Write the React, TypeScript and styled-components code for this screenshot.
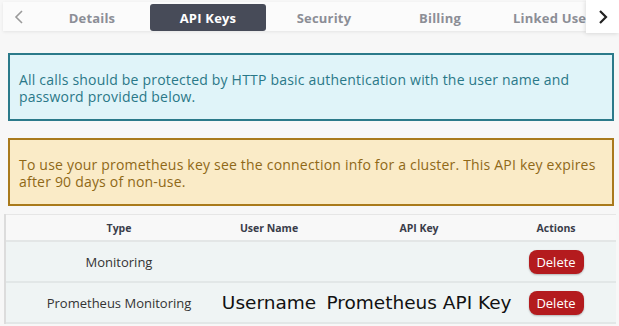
import React from "react";
import styled, { createGlobalStyle } from "styled-components";

const GlobalStyle = createGlobalStyle`
  body {
    margin: 0;
    background: #f7f7f7;
    font-family: "Open Sans", "Liberation Sans", sans-serif;
  }
`;

const Page = styled.div`
  width: 619px;
  height: 326px;
  overflow: hidden;
`;

const TabBar = styled.div`
  display: flex;
  align-items: flex-start;
  height: 34px;
`;

const TabPanel = styled.div`
  flex: 1;
  display: flex;
  align-items: center;
  height: 29px;
  margin: 2px 0 0 3px;
  background: #fbfbfb;
  box-shadow: 0 1px 3px rgba(0, 0, 0, 0.08);
  overflow: hidden;
`;

const Arrow = styled.button<{ $side: "left" | "right" }>`
  flex: none;
  display: flex;
  align-items: center;
  justify-content: center;
  border: none;
  padding: 0;
  cursor: pointer;
  width: ${(p) => (p.$side === "left" ? "31px" : "33px")};
  height: ${(p) => (p.$side === "left" ? "29px" : "33px")};
  background: ${(p) => (p.$side === "left" ? "transparent" : "#ffffff")};
  box-shadow: ${(p) =>
    p.$side === "left" ? "none" : "-1px 1px 4px rgba(0, 0, 0, 0.12)"};
  color: ${(p) => (p.$side === "left" ? "#9a9a9a" : "#222")};
`;

const Tabs = styled.div`
  display: flex;
  height: 100%;
  align-items: flex-end;
`;

const Tab = styled.div<{ $active?: boolean }>`
  flex: none;
  width: 116px;
  height: 27px;
  display: flex;
  align-items: center;
  justify-content: center;
  white-space: nowrap;
  font-size: 13px;
  font-weight: 700;
  letter-spacing: 0.2px;
  border-radius: 3px;
  color: ${(p) => (p.$active ? "#ffffff" : "#8c8e96")};
  background: ${(p) => (p.$active ? "#474b58" : "transparent")};
`;

const Content = styled.div`
  display: flex;
  flex-direction: column;
  padding: 19px 5px 0 8px;
  gap: 17px;
`;

const Alert = styled.div<{ $tone: "info" | "warn" }>`
  border: 2px solid ${(p) => (p.$tone === "info" ? "#2b7a8a" : "#a97a1c")};
  background: ${(p) => (p.$tone === "info" ? "#e0f4f9" : "#faebc7")};
  color: ${(p) => (p.$tone === "info" ? "#2a7888" : "#8f6817")};
  font-size: 14px;
  letter-spacing: 0.2px;
  line-height: 17px;
  padding: 16px 9px 14px;
`;

const Table = styled.div`
  margin: 8px 5px 0 4px;
  border-left: 2px solid #dcdcdc;
  display: grid;
  grid-template-columns: 208px 110px 190px 102px;
`;

type Col = "type" | "user" | "key" | "action";

const colPad = (c: Col) =>
  c === "type" ? "0 0 0 18px" : c === "action" ? "0 18px 0 0" : "0";

const HeadCell = styled.div<{ $col: Col }>`
  height: 25px;
  display: flex;
  align-items: center;
  justify-content: center;
  padding: ${(p) => colPad(p.$col)};
  font-size: 10.5px;
  font-weight: 700;
  color: #3a3d4a;
  background: #f8f8f8;
  border-top: 1px solid #e6e6e6;
  border-bottom: 2px solid #e3e6e6;
`;

const Cell = styled.div<{ $col: Col }>`
  height: 39px;
  display: flex;
  align-items: center;
  justify-content: center;
  padding: ${(p) => colPad(p.$col)};
  background: #eff4f4;
  border-bottom: 2px solid #e2e7e7;
  white-space: nowrap;
  font-size: ${(p) => (p.$col === "user" || p.$col === "key" ? "18.5px" : "13px")};
  color: ${(p) => (p.$col === "user" || p.$col === "key" ? "#111" : "#333")};
  font-family: ${(p) =>
    p.$col === "user" || p.$col === "key"
      ? '"DejaVu Sans", sans-serif'
      : '"Open Sans", sans-serif'};
`;

const DeleteButton = styled.button`
  width: 55px;
  height: 24px;
  border: none;
  border-radius: 8px;
  background: #b41b1e;
  color: #fff;
  font-family: "Open Sans", sans-serif;
  font-size: 13px;
  box-shadow: 0 1px 2px rgba(0, 0, 0, 0.25);
  cursor: pointer;
`;

const Chevron = ({ dir }: { dir: "left" | "right" }) => (
  <svg width="10" height="14" viewBox="0 0 10 14" fill="none">
    <path
      d={dir === "left" ? "M8 1 L2 7 L8 13" : "M2 1 L8 7 L2 13"}
      stroke="currentColor"
      strokeWidth={dir === "left" ? 1.6 : 2.2}
    />
  </svg>
);

const tabs = ["Details", "API Keys", "Security", "Billing", "Linked Users"];

const rows = [
  { type: "Monitoring", user: "", key: "" },
  { type: "Prometheus Monitoring", user: "Username", key: "Prometheus API Key" },
];

const App = () => {
  return (
    <Page>
      <GlobalStyle />
      <TabBar>
        <TabPanel>
          <Arrow $side="left">
            <Chevron dir="left" />
          </Arrow>
          <Tabs>
            {tabs.map((t) => (
              <Tab key={t} $active={t === "API Keys"}>
                {t}
              </Tab>
            ))}
          </Tabs>
        </TabPanel>
        <Arrow $side="right">
          <Chevron dir="right" />
        </Arrow>
      </TabBar>
      <Content>
        <Alert $tone="info">
          All calls should be protected by HTTP basic authentication with the
          user name and password provided below.
        </Alert>
        <Alert $tone="warn">
          To use your prometheus key see the connection info for a cluster. This
          API key expires after 90 days of non-use.
        </Alert>
      </Content>
      <Table>
        <HeadCell $col="type">Type</HeadCell>
        <HeadCell $col="user">User Name</HeadCell>
        <HeadCell $col="key">API Key</HeadCell>
        <HeadCell $col="action">Actions</HeadCell>
        {rows.map((r) => (
          <React.Fragment key={r.type}>
            <Cell $col="type">{r.type}</Cell>
            <Cell $col="user">{r.user}</Cell>
            <Cell $col="key">{r.key}</Cell>
            <Cell $col="action">
              <DeleteButton>Delete</DeleteButton>
            </Cell>
          </React.Fragment>
        ))}
      </Table>
    </Page>
  );
};

export default App;
